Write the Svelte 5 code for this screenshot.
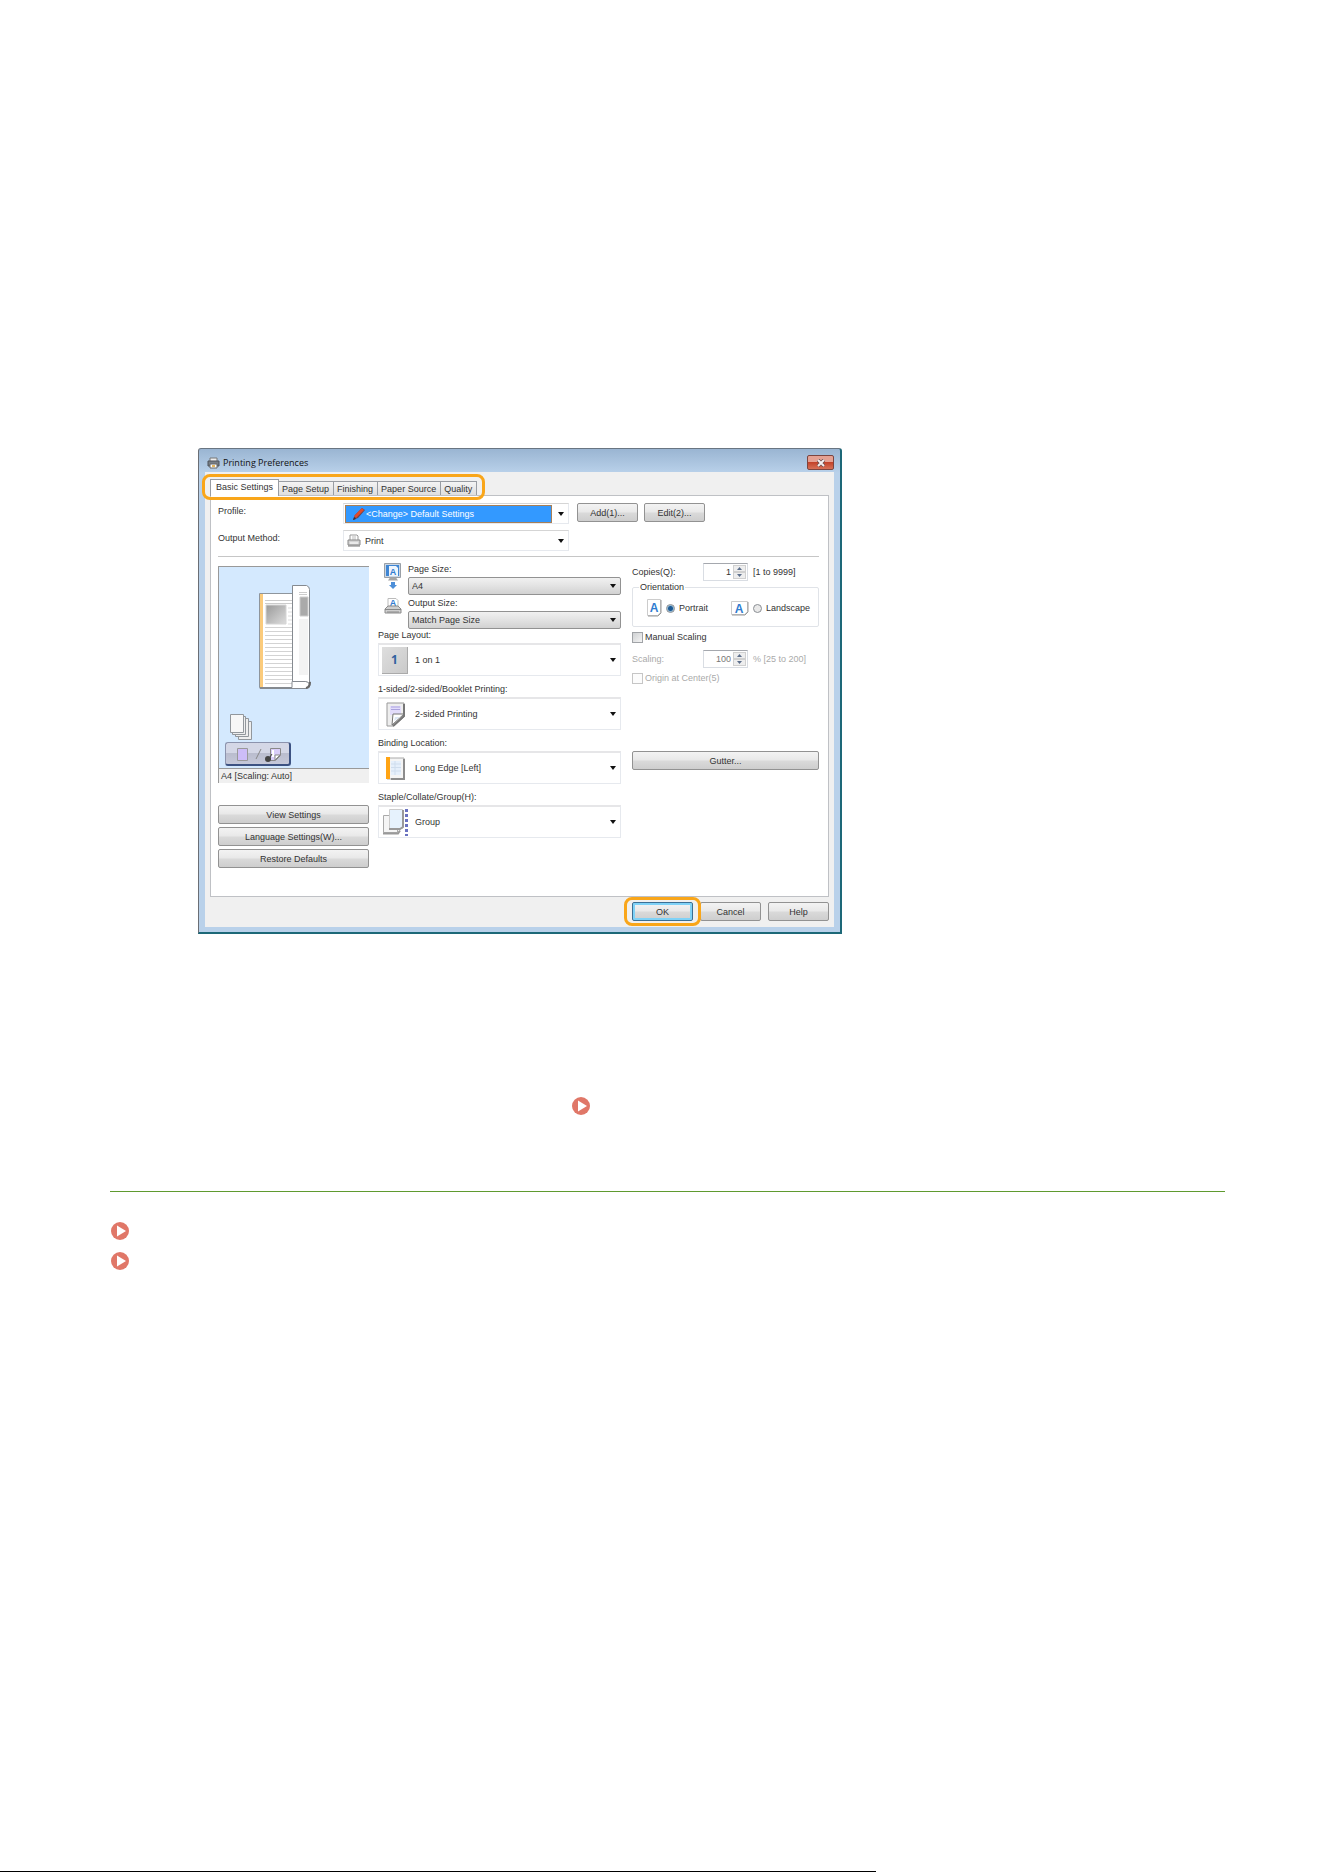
<script lang="ts">
  const tabs = ["Basic Settings", "Page Setup", "Finishing", "Paper Source", "Quality"];
  const fields = [
    { id: "layout", label: "Page Layout:", value: "1 on 1" },
    { id: "sided", label: "1-sided/2-sided/Booklet Printing:", value: "2-sided Printing" },
    { id: "binding", label: "Binding Location:", value: "Long Edge [Left]" },
    { id: "staple", label: "Staple/Collate/Group(H):", value: "Group" },
  ];
  const textLines = Array.from({ length: 15 }, (_, i) => 60 + i * 4);

  let activeTab = $state("Basic Settings");
  let copies = $state(1);
  let scaling = $state(100);
  let orientation = $state("portrait");
  let manualScaling = $state(false);
</script>

{#snippet arrow()}
  <svg class="arrow" width="6" height="4" viewBox="0 0 6 4" aria-hidden="true">
    <path d="M0 0h6L3 4z" fill="#111" />
  </svg>
{/snippet}

{#snippet jump(label: string)}
  <a class="jump" href="#top" aria-label={label}>
    <svg width="18" height="18" viewBox="0 0 18 18" aria-hidden="true">
      <circle cx="9" cy="9" r="9" fill="#e07768" />
      <path d="M6 3.4v11.2L15 9z" fill="#fff" />
    </svg>
  </a>
{/snippet}

{#snippet spinButtons(disabled: boolean, step: (n: number) => void)}
  <span class="spin">
    <button aria-label="Increase" {disabled} onclick={() => step(1)}>
      <svg width="5" height="3" viewBox="0 0 5 3"><path d="M0 3h5L2.500 0z" fill="#5d6f8c" /></svg>
    </button>
    <button aria-label="Decrease" {disabled} onclick={() => step(-1)}>
      <svg width="5" height="3" viewBox="0 0 5 3"><path d="M0 0h5L2.500 3z" fill="#5d6f8c" /></svg>
    </button>
  </span>
{/snippet}

<main id="top">
  <section class="dialog" aria-label="Printing Preferences">
    <header>
      <svg width="13" height="12" viewBox="0 0 13 12" aria-hidden="true">
        <path d="M3 1h7v4H3z" fill="#eee" stroke="#777" />
        <path d="M1 4h11v5H1z" fill="#777e86" stroke="#4e535a" />
        <path d="M3 7h7v4H3z" fill="#fff" stroke="#666" />
        <path d="M5 8h3v2H5z" fill="#e5b860" />
      </svg>
      <h1>Printing Preferences</h1>
      <button class="close" aria-label="Close">
        <svg width="10" height="8" viewBox="0 0 10 8" aria-hidden="true">
          <path d="M2 1l6 6M8 1L2 7" stroke="#6b4b4b" stroke-width="3.500" />
          <path d="M2 1l6 6M8 1L2 7" stroke="#f4f0f0" stroke-width="2" />
        </svg>
      </button>
    </header>

    <div class="client">
      <div class="tabs" role="tablist">
        {#each tabs as tab}
          <button
            role="tab"
            aria-selected={activeTab === tab}
            class:active={activeTab === tab}
            onclick={() => (activeTab = tab)}>{tab}</button
          >
        {/each}
      </div>

      <div class="panel">
        <div class="profile">
          <label for="profile">Profile:</label>
          <div class="combo slim">
            <div class="selected">
              <svg width="14" height="14" viewBox="0 0 14 14" aria-hidden="true">
                <path d="M1 13l2-5 7-7 3 2-7 8z" fill="#6b4651" />
                <path d="M3 10l8-8" stroke="#e04a2c" stroke-width="3" />
                <path d="M1 13l1-3 2 2z" fill="#33313c" />
              </svg>
              <select id="profile"><option>&lt;Change&gt; Default Settings</option></select>
            </div>
            {@render arrow()}
          </div>
          <div class="pair">
            <button class="btn">Add(1)...</button>
            <button class="btn">Edit(2)...</button>
          </div>

          <label for="method">Output Method:</label>
          <div class="combo slim method">
            <svg width="14" height="13" viewBox="0 0 14 13" aria-hidden="true">
              <path d="M3 6V1h7l1 1v4" fill="#fff" stroke="#999" />
              <path d="M5 3h4M5 5h4" stroke="#bbb" />
              <path d="M1 6h12v5H1z" fill="#d4d4d4" stroke="#888" />
              <path d="M3 9h8" stroke="#fff" />
              <path d="M1 12h12" stroke="#777" />
            </svg>
            <select id="method"><option>Print</option></select>
            {@render arrow()}
          </div>
        </div>

        <hr />

        <div class="columns">
          <div class="left">
            <div class="preview">
              <svg width="150" height="175" viewBox="0 0 150 175" aria-hidden="true">
                <defs>
                  <linearGradient id="photo" x2="1" y2="1">
                    <stop offset="0" stop-color="#999" />
                    <stop offset="1" stop-color="#ddd" />
                  </linearGradient>
                </defs>
                <path d="M40.500 26.500h35v94h-35z" fill="#fff" stroke="#8e959c" />
                <path d="M42.500 27v93" stroke="#fbcb7c" stroke-width="3" />
                <path d="M46 33.500h27M46 36.500h27" stroke="#ccc" />
                <path d="M47 38h20v19H47z" fill="url(#photo)" stroke="#d5d5d5" />
                <path d="M69 41h4M69 45h4M69 49h4M69 53h4M69 57h4" stroke="#ddd" />
                {#each textLines as y}
                  <path d="M46 {y + 0.5}h27" stroke="#d3d3d3" />
                {/each}
                <path d="M41 121.500h47q3 0 3-4v-3H73v6H41z" fill="#fff" stroke="#858a90" />
                <path d="M73.500 18.500h14q3 1 3 4v96q0-4-4-4h-13z" fill="#fff" stroke="#858a90" />
                <path d="M80 25.500h8M80 27.500h8" stroke="#ccc" />
                <path d="M81 30h8v19h-8z" fill="#aaa" stroke="#ccc" />
                <path d="M80 52h9v56h-9z" fill="#f3f3f3" />
                <path d="M87 121q4-1 4-6" fill="none" stroke="#666" stroke-width="2" />
                <g fill="#eee" stroke="#92979c">
                  <path d="M19.500 154.500h13v18h-13z" />
                  <path d="M16.500 151.500h13v18h-13z" />
                  <path d="M13.500 149.500h13v18h-13z" />
                  <path d="M11.500 147.500h13v18h-13z" fill="#f7f7f7" />
                </g>
              </svg>
              <button class="sides" aria-label="Switch 1-sided and 2-sided printing">
                <svg width="50" height="18" viewBox="0 0 50 18" aria-hidden="true">
                  <path d="M4.500 3.500h10v12h-10z" fill="#cdbdf8" stroke="#999" />
                  <path d="M23 14l5-10" stroke="#888" />
                  <path d="M37.500 3.500h10v7l-5 5h-5z" fill="#d9cdf8" stroke="#888" />
                  <path d="M42 15v-5h5z" fill="#fff" stroke="#888" />
                  <path d="M40 5v7" stroke="#fff" stroke-width="2" />
                  <circle cx="35" cy="14" r="3" fill="#444" />
                  <path d="M34 14l1 1 4-6" fill="none" stroke="#444" />
                </svg>
              </button>
            </div>
            <p class="caption">A4 [Scaling: Auto]</p>
            <div class="stack">
              <button class="btn">View Settings</button>
              <button class="btn">Language Settings(W)...</button>
              <button class="btn">Restore Defaults</button>
            </div>
          </div>

          <div class="middle">
            <div class="sizes">
              <svg width="18" height="28" viewBox="0 0 18 28" aria-hidden="true">
                <path d="M.5 .5h16v14H.5z" fill="#c9d6e4" stroke="#999fa6" />
                <path d="M2 2h13v11H2z" fill="#3f86d4" />
                <path d="M5 3h7l2 2v8H5z" fill="#eef5fd" />
                <text class="letter" x="9" y="12">A</text>
                <path d="M4 17.500h10l-2-3H6z" fill="#a5a5a5" />
                <path d="M7 19h4v3h2l-4 4-4-4h2z" fill="#4d8fd8" />
              </svg>
              <div class="size">
                <label for="page-size">Page Size:</label>
                <div class="drop">
                  <select id="page-size"><option>A4</option></select>
                  {@render arrow()}
                </div>
              </div>
              <svg width="18" height="18" viewBox="0 0 18 18" aria-hidden="true">
                <path d="M4 10V1.500h8l2 2V10" fill="#fff" stroke="#bbb" />
                <text class="letter" x="9" y="9">A</text>
                <path d="M1 12l3-3h10l3 3v4H1z" fill="#cfcfcf" stroke="#8c8c8c" />
                <path d="M1 12.500h16M3 15h12" stroke="#888" />
              </svg>
              <div class="size">
                <label for="output-size">Output Size:</label>
                <div class="drop">
                  <select id="output-size"><option>Match Page Size</option></select>
                  {@render arrow()}
                </div>
              </div>
            </div>

            {#each fields as field}
              <div class="field">
                <label for={field.id}>{field.label}</label>
                <div class="combo tall">
                  {#if field.id === "layout"}
                    <span class="one" aria-hidden="true">1</span>
                  {:else if field.id === "sided"}
                    <svg width="26" height="27" viewBox="0 0 26 27" aria-hidden="true">
                      <path d="M5 2h17v14L12 25H5z" fill="#eee" stroke="#999" />
                      <path d="M8 5h11v9H8z" fill="#e2dcfb" />
                      <path d="M9 6h9M9 8.500h9" stroke="#aaa2dd" />
                      <path d="M22 3v12L11 25" fill="none" stroke="#777" stroke-width="2" />
                      <path d="M10 24l1-11h11z" fill="#fff" stroke="#777" />
                      <path d="M12 20l1-4h5z" fill="#dde7f6" />
                    </svg>
                  {:else if field.id === "binding"}
                    <svg width="26" height="27" viewBox="0 0 26 27" aria-hidden="true">
                      <path d="M5 3h17v21H5z" fill="#f4f4f4" stroke="#aaa" />
                      <path d="M22 4v20H9" fill="none" stroke="#8c8c8c" stroke-width="2" />
                      <path d="M9 6h10v14H9z" fill="#e5effb" />
                      <path d="M9 9h10M9 12.500h10M9 16h10M13 6v14" stroke="#cfdded" />
                      <path d="M4 2h4v22H4z" fill="#ffa414" />
                    </svg>
                  {:else}
                    <svg width="26" height="27" viewBox="0 0 26 27" aria-hidden="true">
                      <path d="M1.500 6.500h14v17h-14z" fill="#f5f5f5" stroke="#aaa" />
                      <path d="M1 24.500h15l2-3" fill="none" stroke="#999" stroke-width="2" />
                      <path d="M7.500.5h13v19h-13z" fill="#e6f2fd" stroke="#ccc" />
                      <path d="M7 20h11l3-2V1" fill="none" stroke="#999" stroke-width="2" />
                      <path d="M24.500 0v27" stroke="#6972c0" stroke-width="3" stroke-dasharray="3 2" />
                    </svg>
                  {/if}
                  <select id={field.id}><option>{field.value}</option></select>
                  {@render arrow()}
                </div>
              </div>
            {/each}
          </div>

          <div class="right">
            <div class="count">
              <label for="copies">Copies(Q):</label>
              <div class="number">
                <input id="copies" type="text" bind:value={copies} />
                {@render spinButtons(false, (n) => (copies += n))}
              </div>
              <span>[1 to 9999]</span>
            </div>

            <fieldset>
              <legend>Orientation</legend>
              <label>
                <svg width="15" height="18" viewBox="0 0 15 18" aria-hidden="true">
                  <path d="M.5.5h13v13l-3 3H.5z" fill="#fff" stroke="#ccc" />
                  <path d="M14 1v13l-3 3H1" fill="none" stroke="#999" />
                  <text class="letter big" x="7" y="13">A</text>
                </svg>
                <input type="radio" name="orientation" value="portrait" bind:group={orientation} />
                Portrait
              </label>
              <label>
                <svg width="18" height="15" viewBox="0 0 18 15" aria-hidden="true">
                  <path d="M.5.5h16v10l-3 3H.5z" fill="#fff" stroke="#ccc" />
                  <path d="M17 1v10l-3 3H1" fill="none" stroke="#999" />
                  <text class="letter big" x="8" y="12">A</text>
                </svg>
                <input type="radio" name="orientation" value="landscape" bind:group={orientation} />
                Landscape
              </label>
            </fieldset>

            <label class="check">
              <input type="checkbox" bind:checked={manualScaling} />
              Manual Scaling
            </label>
            <div class="count scaling" class:off={!manualScaling}>
              <label for="scaling">Scaling:</label>
              <div class="number">
                <input id="scaling" type="text" bind:value={scaling} disabled={!manualScaling} />
                {@render spinButtons(!manualScaling, (n) => (scaling += n))}
              </div>
              <span>% [25 to 200]</span>
            </div>
            <label class="check" class:off={!manualScaling}>
              <input type="checkbox" disabled={!manualScaling} />
              Origin at Center(5)
            </label>
            <button class="btn gutter">Gutter...</button>
          </div>
        </div>
      </div>

      <footer>
        <span class="ok"><button class="btn default">OK</button></span>
        <button class="btn">Cancel</button>
        <button class="btn">Help</button>
      </footer>
    </div>
  </section>

  <p class="note">{@render jump("See also")}</p>

  <ul>
    <li>{@render jump("First related topic")}</li>
    <li>{@render jump("Second related topic")}</li>
  </ul>

  <div class="page-end"></div>
</main>

<style>
  :global(body) {
    background: #fff;
  }

  main {
    box-sizing: border-box;
    min-height: 100vh;
    padding: 448px 99px 0 110px;
    display: flex;
    flex-direction: column;
    font: 9px/12px "Liberation Sans", Arial, sans-serif;
    color: #333;
  }

  main *,
  main *::after {
    box-sizing: border-box;
  }

  svg {
    display: block;
    flex-shrink: 0;
  }

  button,
  input,
  select {
    font: inherit;
    color: inherit;
    margin: 0;
    padding: 0;
  }

  .letter {
    font-weight: bold;
    fill: #2f7cd0;
    text-anchor: middle;
  }

  .big {
    font-size: 12px;
  }

  .dialog {
    width: 100%;
    max-width: 644px;
    margin-left: 88px;
    padding: 0 6px 5px;
    border: solid #1d6878;
    border-width: 1px 2px 2px 1px;
    border-top-color: #697582;
    border-left-color: #6a6e75;
    border-radius: 3px 3px 0 0;
    background: linear-gradient(#9ab5d2, #b9d1ea 24px);
  }

  header {
    height: 23px;
    display: flex;
    align-items: center;
    gap: 3px;
    padding-left: 2px;
    padding-top: 4px;
  }

  h1 {
    margin: 0;
    flex: 1;
    font: 9px/12px "Open Sans", sans-serif;
    color: #111;
  }

  .close {
    width: 27px;
    height: 15px;
    display: grid;
    place-items: center;
    border: 1px solid #7c4540;
    border-radius: 2px;
    background: linear-gradient(#e5a193 45%, #c3432a 50%, #d77157);
  }

  .client {
    background: #f0f0f0;
    padding: 7px 5px 6px;
  }

  .tabs {
    position: relative;
    width: fit-content;
    height: 16px;
    display: flex;
    align-items: flex-end;
  }

  .tabs::after,
  .ok::after {
    content: "";
    position: absolute;
    inset: -5px -8px;
    border: 3px solid #f9a61a;
    border-radius: 8px;
    pointer-events: none;
    z-index: 1;
  }

  .tabs button {
    height: 14px;
    padding: 0 4px 0 3px;
    border: 1px solid #999da3;
    border-left: 0;
    border-bottom: 0;
    background: linear-gradient(#f4f4f4, #dedede);
    white-space: nowrap;
  }

  .tabs button.active {
    position: relative;
    height: 17px;
    margin-bottom: -1px;
    padding: 0 5px 2px;
    border-left: 1px solid #999da3;
    background: #fff;
  }

  .panel {
    padding: 7px 9px 28px 7px;
    border: 1px solid #bfc1c5;
    background: #fff;
  }

  .profile {
    display: grid;
    grid-template-columns: 125px 226px 1fr;
    row-gap: 6px;
  }

  .profile label {
    padding-top: 2px;
  }

  .pair {
    display: flex;
    gap: 6px;
    padding-left: 8px;
  }

  .pair .btn,
  footer .btn {
    width: 61px;
  }

  .combo {
    display: flex;
    align-items: center;
    border: 1px solid #e6e9ee;
    border-top-color: #d5d5d5;
    background: #fff;
    padding-right: 4px;
  }

  .slim {
    height: 21px;
  }

  .method {
    padding-left: 3px;
    gap: 4px;
  }

  .selected {
    flex: 1;
    height: 18px;
    display: flex;
    align-items: center;
    margin: 0 6px 0 1px;
    padding-left: 6px;
    border: 1px solid #a77f57;
    background: #3399ff;
    color: #fff;
  }

  .tall {
    height: 33px;
    border-top: 2px solid #e6e6e8;
    padding-left: 3px;
    gap: 7px;
  }

  select {
    flex: 1;
    min-width: 0;
    height: 100%;
    border: 0;
    background: transparent;
    appearance: none;
  }

  .drop {
    height: 18px;
    display: flex;
    align-items: center;
    padding: 0 4px 0 3px;
    border: 1px solid #929292;
    border-radius: 2px;
    background: linear-gradient(#f1f1f1, #e4e4e4 45%, #d2d2d2);
  }

  .one {
    width: 26px;
    height: 27px;
    display: grid;
    place-items: center;
    border-right: 1px solid #aaa;
    border-bottom: 1px solid #aaa;
    background: linear-gradient(135deg, #dedede, #cacaca);
    font: bold 12px/12px "Open Sans", sans-serif;
    color: #31629f;
  }

  .btn {
    height: 19px;
    border: 1px solid #929292;
    border-radius: 2px;
    background: linear-gradient(#f3f3f3, #e9e9e9 45%, #d9d9d9 55%, #cecece);
    white-space: nowrap;
  }

  hr {
    margin: 5px 0 6px;
    border: 0;
    border-top: 1px solid #c6c6c6;
  }

  .columns {
    display: grid;
    grid-template-columns: 160px 254px 1fr;
  }

  .left {
    padding: 3px 9px 0 0;
  }

  .preview {
    height: 203px;
    border: 1px solid #999;
    border-right: 0;
    background: #d4e9fe;
  }

  .sides {
    width: 66px;
    height: 24px;
    display: grid;
    place-items: center;
    margin-left: 6px;
    border: 1px solid #8c93ad;
    border-right: 2px solid #3c5282;
    border-bottom: 2px solid #3c5282;
    border-radius: 3px;
    background: linear-gradient(#d4d7e6 50%, #babdce 50%, #c5c8d9);
  }

  .caption {
    height: 14px;
    margin: 0;
    padding: 1px 2px;
    border-left: 1px solid #999;
    background: #f0f0f0;
  }

  .stack {
    display: grid;
    gap: 3px;
    margin-top: 22px;
  }

  .middle {
    display: grid;
    align-content: start;
    gap: 7px;
    padding-right: 11px;
  }

  .sizes {
    display: grid;
    grid-template-columns: 30px 1fr;
    row-gap: 2px;
    margin-bottom: -7px;
  }

  .sizes > svg {
    justify-self: center;
  }

  .size,
  .field {
    display: grid;
    gap: 2px;
  }

  .right {
    display: flex;
    flex-direction: column;
  }

  .count {
    display: flex;
    align-items: center;
    gap: 5px;
  }

  .count label {
    width: 66px;
  }

  .number {
    width: 45px;
    height: 18px;
    display: flex;
    padding: 1px;
    border: 1px solid #d9dde3;
    border-top-color: #a5a8ae;
    background: #fff;
  }

  .number input {
    flex: 1;
    min-width: 0;
    padding-right: 2px;
    border: 0;
    background: transparent;
    text-align: right;
  }

  .spin {
    width: 13px;
    display: grid;
    grid-template-rows: 1fr 1fr;
  }

  .spin button {
    min-height: 0;
    display: grid;
    place-items: center;
    border: 1px solid #d0d0d0;
    background: #eee;
  }

  fieldset {
    height: 46px;
    min-width: 0;
    margin: 0;
    padding: 5px 8px 0 14px;
    display: flex;
    justify-content: space-between;
    border: 1px solid #e0e3e8;
    border-radius: 2px;
  }

  legend {
    margin-left: -8px;
    padding: 0 1px;
  }

  fieldset label {
    height: 20px;
    display: flex;
    align-items: center;
    gap: 4px;
  }

  input[type="radio"] {
    appearance: none;
    width: 9px;
    height: 9px;
    border: 1px solid #8b8f94;
    border-radius: 50%;
    background: #e9e9e9;
  }

  input[type="radio"]:checked {
    background: radial-gradient(#1d5a94 2px, #8fb9d6 3px, #e9e9e9 4px);
  }

  .check {
    display: flex;
    align-items: center;
    gap: 2px;
    margin-top: 4px;
  }

  input[type="checkbox"] {
    appearance: none;
    width: 11px;
    height: 11px;
    border: 1px solid #a0a3a7;
    background: linear-gradient(135deg, #cfd1d3, #f4f4f4);
  }

  input[type="checkbox"]:checked {
    background: #3c6fa5;
  }

  input[type="checkbox"]:disabled {
    border-color: #c6c6c6;
    background: #fcfcfc;
  }

  .scaling {
    margin-top: 7px;
  }

  .off {
    color: #aaa;
  }

  .off input[type="text"] {
    color: #777;
  }

  .gutter {
    margin-top: 67px;
  }

  footer {
    display: flex;
    justify-content: flex-end;
    gap: 7px;
    padding-top: 5px;
  }

  .ok {
    position: relative;
    display: flex;
  }

  .default {
    border-color: #3c6f94;
    box-shadow: inset 0 0 0 2px #7fd2f7;
  }

  .note {
    margin: 163px 0 76px 462px;
  }

  .jump {
    display: block;
    width: 18px;
  }

  ul {
    display: grid;
    gap: 12px;
    margin: 0;
    padding: 30px 1px;
    border-top: 1px solid #5f9a2f;
    list-style: none;
  }

  .page-end {
    width: calc(100% - 239px);
    height: 1px;
    margin-top: auto;
    margin-left: -110px;
    background: #000;
  }
</style>
